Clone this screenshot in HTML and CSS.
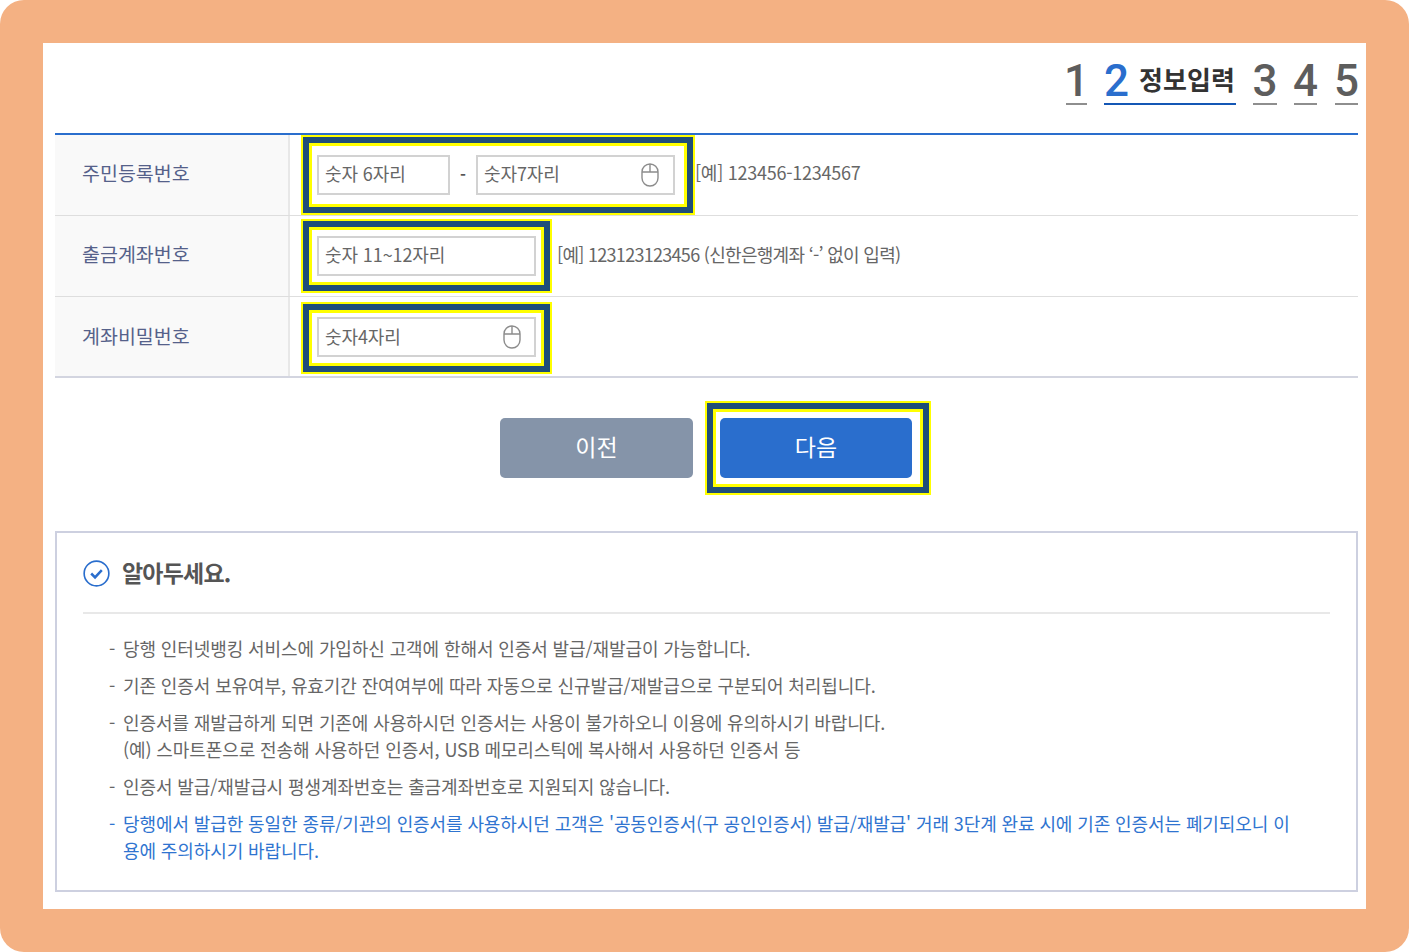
FILE: index.html
```html
<!DOCTYPE html>
<html lang="ko">
<head>
<meta charset="utf-8">
<title>정보입력</title>
<link rel="stylesheet" href="styles.css">
</head>
<body>
<div class="frame">
  <main class="panel">
    <ol class="steps">
      <li class="step step-one">1</li>
      <li class="step current"><span class="num">2</span><span class="step-name">정보입력</span></li>
      <li class="step step-three">3</li>
      <li class="step step-four">4</li>
      <li class="step">5</li>
    </ol>

    <div class="form">
      <div class="row">
        <div class="label">주민등록번호</div>
        <div class="cell">
          <div class="hl hl-tall">
            <div class="field w-133"><span class="ph">숫자 6자리</span></div>
            <span class="dash">-</span>
            <div class="field w-199 field-wide"><span class="ph">숫자7자리</span>
              <svg class="mouse" viewBox="0 0 18 24"><rect x="1" y="1" width="16" height="22" rx="8" fill="none" stroke="#8c8c8c" stroke-width="1.4"/><path d="M9 1v8M1 9h16" fill="none" stroke="#8c8c8c" stroke-width="1.4"/></svg>
            </div>
          </div>
          <span class="hint hint-a">[예] 123456-1234567</span>
        </div>
      </div>
      <div class="row">
        <div class="label">출금계좌번호</div>
        <div class="cell">
          <div class="hl">
            <div class="field w-219"><span class="ph">숫자 11~12자리</span></div>
          </div>
          <span class="hint hint-b">[예] 123123123456 (신한은행계좌 ‘-’ 없이 입력)</span>
        </div>
      </div>
      <div class="row row-last">
        <div class="label">계좌비밀번호</div>
        <div class="cell">
          <div class="hl hl-short">
            <div class="field w-219"><span class="ph">숫자4자리</span>
              <svg class="mouse" viewBox="0 0 18 24"><rect x="1" y="1" width="16" height="22" rx="8" fill="none" stroke="#8c8c8c" stroke-width="1.4"/><path d="M9 1v8M1 9h16" fill="none" stroke="#8c8c8c" stroke-width="1.4"/></svg>
            </div>
          </div>
        </div>
      </div>
    </div>

    <div class="actions">
      <button class="btn btn-prev" type="button">이전</button>
      <div class="hl hl-btn"><button class="btn btn-next" type="button">다음</button></div>
    </div>

    <section class="notice">
      <header class="notice-head">
        <svg class="check" viewBox="0 0 28 28"><circle cx="14" cy="14" r="12.8" fill="none" stroke="#2a6ecd" stroke-width="1.7"/><path d="M8.5 14l4 4 7-7.5" fill="none" stroke="#2a6ecd" stroke-width="2.6"/></svg>
        <h2 class="notice-title">알아두세요.</h2>
      </header>
      <ul class="notes">
        <li>당행 인터넷뱅킹 서비스에 가입하신 고객에 한해서 인증서 발급/재발급이 가능합니다.</li>
        <li>기존 인증서 보유여부, 유효기간 잔여여부에 따라 자동으로 신규발급/재발급으로 구분되어 처리됩니다.</li>
        <li>인증서를 재발급하게 되면 기존에 사용하시던 인증서는 사용이 불가하오니 이용에 유의하시기 바랍니다.<br>(예) 스마트폰으로 전송해 사용하던 인증서, USB 메모리스틱에 복사해서 사용하던 인증서 등</li>
        <li>인증서 발급/재발급시 평생계좌번호는 출금계좌번호로 지원되지 않습니다.</li>
        <li class="blue">당행에서 발급한 동일한 종류/기관의 인증서를 사용하시던 고객은 '공동인증서(구 공인인증서) 발급/재발급' 거래 3단계 완료 시에 기존 인증서는 폐기되오니 이용에 주의하시기 바랍니다.</li>
      </ul>
    </section>
  </main>
</div>
</body>
</html>
```
FILE: styles.css
```css
* { box-sizing: border-box; }
html, body { margin: 0; padding: 0; background: #fff; }
body { font-family: "Noto Sans CJK KR", "Noto Sans", sans-serif; }
.frame {
  width: 1409px; height: 952px; padding: 43px;
  background: #f4b183; border-radius: 24px;
}
.panel { height: 866px; background: #fff; padding: 0 8px 0 12px; }

.steps {
  list-style: none; margin: 0; padding: 0 0 28px;
  height: 90px; display: flex; justify-content: flex-end; align-items: flex-end; gap: 17px;
}
.step {
  width: 23px; height: 46px;
  font: 500 44px/44px Roboto, sans-serif; color: #5d5d5d;
  border-bottom: 2px solid #8e8e8e;
  display: flex; align-items: flex-start; justify-content: center;
}
.step-one { width: 21px; }
.step-three { width: 24px; }
.step-four { margin-right: 1px; }
.step.current {
  width: 132px; justify-content: flex-start; border-bottom-color: #1457b5; color: #2a6ecd; gap: 10px;
}
.step-name {
  font: 700 26px/40px "Noto Sans CJK KR", sans-serif; color: #333; letter-spacing: 0.1px; white-space: nowrap;
}

.form { border-top: 2px solid #2a6ecd; }
.row { display: flex; height: 81px; border-bottom: 1px solid #dedede; }
.row-last { border-bottom: 2px solid #d3d5e0; }
.label {
  width: 235px; background: #f9f9f9; border-right: 2px solid #e8e8e8;
  padding: 0 0 6px 27px; display: flex; align-items: center;
  font-size: 19.5px; color: #55618a;
}
.row-last .label { padding-bottom: 2px; }
.cell { flex: 1; display: flex; align-items: center; padding-left: 13px; }

.hl {
  display: flex; align-items: center; height: 70px; padding: 0 8px;
  background: #fff; border: 6px solid #1f4e79;
  box-shadow: 0 0 0 2px #ff0, inset 0 0 0 3px #ff0;
}
.hl-tall { height: 76px; padding-right: 12px; }
.hl-short { height: 68px; margin-top: 2px; padding-bottom: 2px; }
.field {
  height: 40px; background: #fff; border: 2px solid #d2d2d2;
  display: flex; align-items: center; justify-content: space-between; padding: 0 13px 0 6px;
  font-size: 18px; color: #666; letter-spacing: -0.1px;
}
.ph { margin-top: -4px; }
.hl-short .ph { margin-top: -2px; }
.w-133 { width: 133px; }
.w-199 { width: 199px; }
.w-219 { width: 219px; }
.field-wide { padding-right: 14px; }
.dash { width: 26px; padding-bottom: 3px; text-align: center; font-size: 16px; font-weight: 700; color: #555; }
.mouse { width: 18px; height: 24px; flex: none; }
.hint { font-size: 18px; color: #666; }
.hint-a { margin-left: 2px; padding-bottom: 7px; letter-spacing: -0.25px; }
.hint-b { margin-left: 7px; padding-bottom: 5px; letter-spacing: -0.7px; }

.actions {
  height: 153px; display: flex; align-items: flex-start; justify-content: center;
  padding: 25px 0 0 16px; gap: 14px;
}
.btn {
  width: 193px; height: 60px; padding: 0 0 4px; border: 0; border-radius: 5px; color: #fff;
  font: 400 23px "Noto Sans CJK KR", sans-serif;
}
.btn-prev { background: #8594a9; margin-top: 15px; }
.btn-next { width: 192px; background: #2a6ecd; }
.hl-btn { height: 90px; width: 222px; padding: 0 7px; }

.notice {
  height: 361px; border: 2px solid #cdd0e0; padding: 0 26px;
}
.notice-head {
  height: 81px; display: flex; align-items: center; gap: 12px;
  border-bottom: 2px solid #e8e8e8;
}
.check { width: 27px; height: 27px; flex: none; margin-top: 2px; }
.notice-title { margin: -2px 0 0; font-size: 23px; font-weight: 700; color: #555; letter-spacing: -0.8px; }
.notes { list-style: none; margin: 0; padding: 21px 30px 0 26px; }
.notes li {
  position: relative; padding-left: 14px; margin-bottom: 10px; word-break: break-all;
  font-size: 18px; line-height: 27px; color: #666; letter-spacing: -0.1px;
}
.notes li::before { content: "-"; position: absolute; left: 0; top: 0; }
.notes li.blue { color: #2f74d0; }
```
